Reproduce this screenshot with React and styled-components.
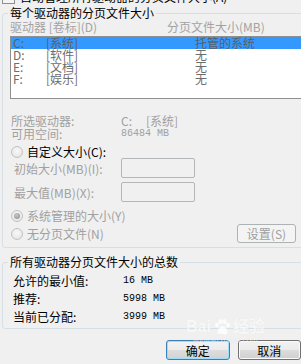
import React from "react";
import styled, { createGlobalStyle, css } from "styled-components";

const Global = createGlobalStyle`
  html, body { margin: 0; padding: 0; background: #f0f0f0; }
  body { font-family: "Noto Sans CJK SC", "Noto Sans", sans-serif; font-size: 12px; }
`;

const Page = styled.div`
  position: relative;
  width: 301px;
  height: 364px;
  overflow: hidden;
  background: #f0f0f0;
  display: flex;
  flex-direction: column;
  color: #000;
`;

const TopRow = styled.div`
  height: 4px;
  overflow: hidden;
  display: flex;
  align-items: flex-end;
  gap: 5px;
  padding-left: 2px;
  flex-shrink: 0;
`;

const CheckBox = styled.span`
  width: 11px;
  height: 11px;
  border: 1px solid #8e8f8f;
  background: #f4f4f4;
  flex-shrink: 0;
`;

const TopText = styled.span`
  line-height: 14px;
  white-space: nowrap;
`;

const Group = styled.div`
  position: relative;
  box-sizing: border-box;
  margin-left: 2px;
  margin-top: ${(p) => p.$mt}px;
  width: 312px;
  height: ${(p) => p.$h}px;
  border: 1px solid #d5dfe5;
  border-radius: 3px;
  flex-shrink: 0;
  display: flex;
  flex-direction: column;
`;

const GroupTitle = styled.span`
  position: absolute;
  top: -8px;
  left: 5px;
  padding: 0 2px;
  background: #f0f0f0;
  line-height: 14px;
  white-space: nowrap;
`;

const HeaderRow = styled.div`
  display: grid;
  grid-template-columns: 157px 1fr;
  margin-top: 7px;
  padding-left: 7px;
  line-height: 12px;
  height: 12px;
  color: #a3a3a3;
  white-space: nowrap;
`;

const ListBox = styled.div`
  box-sizing: border-box;
  margin-top: 3px;
  margin-left: 7px;
  height: 63px;
  border: 1px solid #8e8f8f;
  background: #fff;
  display: flex;
  flex-direction: column;
`;

const ListRow = styled.div`
  display: grid;
  grid-template-columns: 33px 149px 1fr;
  height: 12px;
  line-height: 12px;
  padding-left: 2px;
  color: #6d6d6d;
  white-space: nowrap;
  ${(p) =>
    p.$selected &&
    css`
      background: #3399ff;
      color: #5a5f66;
    `}
`;

const InfoRow = styled.div`
  display: grid;
  grid-template-columns: 110px 1fr;
  padding-left: ${(p) => p.$pl ?? 8}px;
  margin-top: ${(p) => p.$mt ?? 0}px;
  height: ${(p) => p.$h ?? 13}px;
  line-height: ${(p) => p.$h ?? 13}px;
  color: ${(p) => (p.$dark ? "#000" : "#a0a0a0")};
  white-space: nowrap;
`;

const Value = styled.span`
  display: flex;
  gap: 14px;
`;

const Mono = styled.span`
  font-family: "Liberation Mono", "DejaVu Sans Mono", "Noto Sans CJK SC", monospace;
  font-size: 10px;
  letter-spacing: 0;
`;

const RadioRow = styled.label`
  display: flex;
  align-items: center;
  gap: 4px;
  padding-left: 8px;
  margin-top: ${(p) => p.$mt ?? 0}px;
  height: ${(p) => p.$h ?? 13}px;
  line-height: 13px;
  color: ${(p) => (p.$dark ? "#000" : "#a0a0a0")};
  white-space: nowrap;
`;

const Radio = styled.span`
  box-sizing: border-box;
  position: relative;
  width: 12px;
  height: 12px;
  border-radius: 50%;
  border: 1px solid #c2c2c2;
  background: radial-gradient(circle at 50% 40%, #f8f8f8, #e2e2e2);
  flex-shrink: 0;
  ${(p) =>
    p.$checked &&
    css`
      &::after {
        content: "";
        position: absolute;
        left: 2px;
        top: 2px;
        width: 6px;
        height: 6px;
        border-radius: 50%;
        background: radial-gradient(circle at 40% 35%, #c8c8c8, #8a8a8a);
      }
    `}
`;

const FieldRow = styled.div`
  display: grid;
  grid-template-columns: 107px 74px;
  align-items: center;
  padding-left: 11px;
  margin-top: ${(p) => p.$mt ?? 0}px;
  height: 20px;
  color: #a0a0a0;
  white-space: nowrap;
`;

const Input = styled.span`
  box-sizing: border-box;
  height: 20px;
  border: 1px solid #b3b7ba;
  border-radius: 2px;
  background: #f0f0f0;
`;

const SplitRow = styled.div`
  display: grid;
  grid-template-columns: 234px 59px;
  align-items: center;
  margin-top: 2px;
  height: 19px;
`;

const Button = styled.span`
  box-sizing: border-box;
  display: flex;
  align-items: center;
  justify-content: center;
  height: ${(p) => p.$h ?? 20}px;
  width: ${(p) => p.$w}px;
  border-radius: 3px;
  white-space: nowrap;
  ${(p) =>
    p.$disabled
      ? css`
          border: 1px solid #adb2b5;
          background: #f4f4f4;
          color: #a0a0a0;
        `
      : p.$default
      ? css`
          border: 1px solid #3c7fb1;
          box-shadow: inset 0 0 0 1px #9fdcfa;
          background: linear-gradient(#f3f3f3 0%, #ececec 50%, #dedede 51%, #d2d2d2 100%);
          color: #000;
        `
      : css`
          border: 1px solid #707070;
          box-shadow: inset 0 0 0 1px #fafafa;
          background: linear-gradient(#f2f2f2 0%, #ebebeb 50%, #dddddd 51%, #cfcfcf 100%);
          color: #000;
        `}
`;

const ButtonRow = styled.div`
  display: flex;
  gap: 8px;
  padding-left: 166px;
  margin-top: 11px;
  flex-shrink: 0;
`;

const Watermark = styled.div`
  position: absolute;
  left: 186px;
  top: 318px;
  display: flex;
  flex-direction: column;
  align-items: center;
  color: rgba(255, 255, 255, 0.8);
  text-shadow: 0 0 1px rgba(0, 0, 0, 0.08);
  pointer-events: none;
`;

const WmTitle = styled.div`
  display: flex;
  align-items: center;
  gap: 2px;
  font-family: "Liberation Sans", "Noto Sans CJK SC", sans-serif;
  font-size: 16px;
  font-weight: bold;
  line-height: 18px;
`;

const WmUrl = styled.div`
  font-family: "Liberation Sans", sans-serif;
  font-size: 8px;
  line-height: 9px;
  color: rgba(255, 255, 255, 0.6);
`;

const drives = [
  { d: "C:", l: "[系统]", s: "托管的系统", sel: true },
  { d: "D:", l: "[软件]", s: "无" },
  { d: "E:", l: "[文档]", s: "无" },
  { d: "F:", l: "[娱乐]", s: "无" },
];

export default function App() {
  return (
    <Page>
      <Global />
      <TopRow>
        <CheckBox />
        <TopText>自动管理所有驱动器的分页文件大小(A)</TopText>
      </TopRow>

      <Group $mt={9} $h={235}>
        <GroupTitle>每个驱动器的分页文件大小</GroupTitle>
        <HeaderRow>
          <span>驱动器 [卷标](D)</span>
          <span>分页文件大小(MB)</span>
        </HeaderRow>
        <ListBox>
          {drives.map((r) => (
            <ListRow key={r.d} $selected={r.sel}>
              <span>{r.d}</span>
              <span>{r.l}</span>
              <span>{r.s}</span>
            </ListRow>
          ))}
        </ListBox>
        <InfoRow $mt={15}>
          <span>所选驱动器:</span>
          <Value>
            <span>C:</span>
            <span>[系统]</span>
          </Value>
        </InfoRow>
        <InfoRow>
          <span>可用空间:</span>
          <Mono>86484 MB</Mono>
        </InfoRow>
        <RadioRow $mt={5} $dark>
          <Radio />
          <span>自定义大小(C):</span>
        </RadioRow>
        <FieldRow>
          <span>初始大小(MB)(I):</span>
          <Input />
        </FieldRow>
        <FieldRow $mt={4}>
          <span>最大值(MB)(X):</span>
          <Input />
        </FieldRow>
        <RadioRow $mt={7}>
          <Radio $checked />
          <span>系统管理的大小(Y)</span>
        </RadioRow>
        <SplitRow>
          <RadioRow $h={19}>
            <Radio />
            <span>无分页文件(N)</span>
          </RadioRow>
          <Button $disabled $w={59} $h={19}>设置(S)</Button>
        </SplitRow>
      </Group>

      <Group $mt={14} $h={67}>
        <GroupTitle>所有驱动器分页文件大小的总数</GroupTitle>
        <InfoRow $dark $pl={10} $mt={9} $h={18}>
          <span>允许的最小值:</span>
          <Mono>16 MB</Mono>
        </InfoRow>
        <InfoRow $dark $pl={10} $h={18}>
          <span>推荐:</span>
          <Mono>5998 MB</Mono>
        </InfoRow>
        <InfoRow $dark $pl={10} $h={18}>
          <span>当前已分配:</span>
          <Mono>3999 MB</Mono>
        </InfoRow>
      </Group>

      <ButtonRow>
        <Button $default $w={72}>确定</Button>
        <Button $w={72}>取消</Button>
      </ButtonRow>

      <Watermark>
        <WmTitle>
          <span>Bai</span>
          <svg width="18" height="16" viewBox="0 0 18 16">
            <g fill="rgba(255,255,255,0.8)">
              <ellipse cx="4" cy="6" rx="2" ry="2.5" />
              <ellipse cx="7.5" cy="2.5" rx="2" ry="2.5" />
              <ellipse cx="11.5" cy="2.5" rx="2" ry="2.5" />
              <ellipse cx="15" cy="6" rx="2" ry="2.5" />
              <path d="M9.5 7c3 0 5 4 5 6.5S12 16 9.5 15 4.5 16 4.5 13.5 6.5 7 9.5 7z" />
            </g>
          </svg>
          <span>经验</span>
        </WmTitle>
        <WmUrl>jingyan.baidu.com</WmUrl>
      </Watermark>
    </Page>
  );
}
